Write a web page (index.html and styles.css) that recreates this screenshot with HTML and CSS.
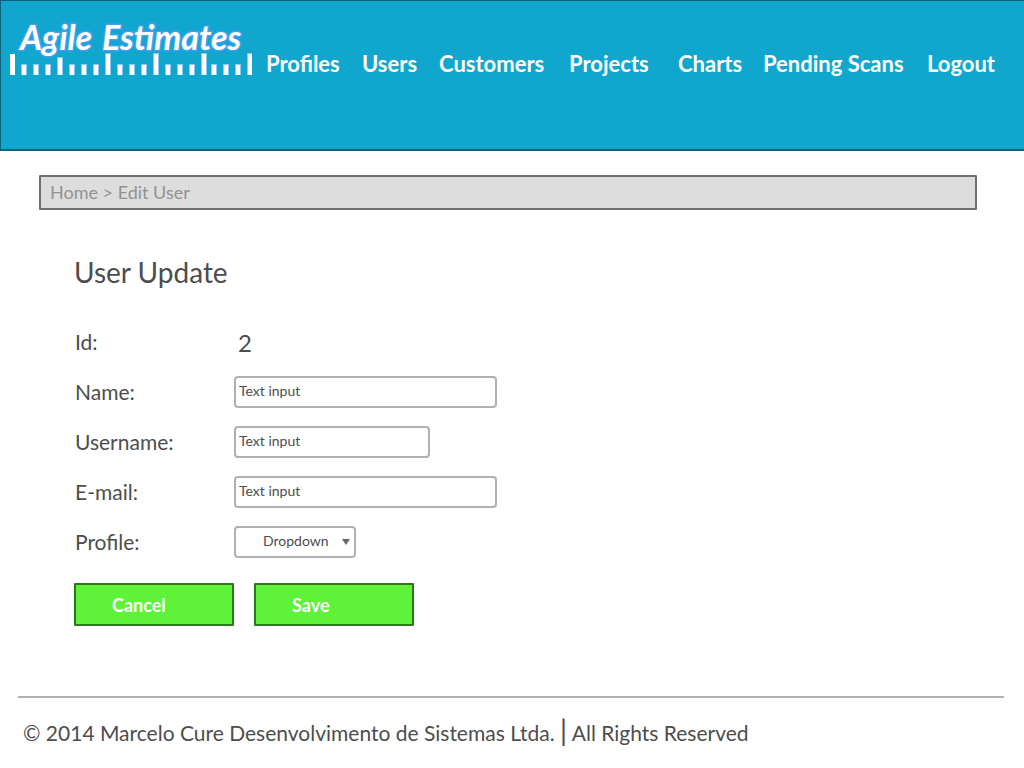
FILE: index.html
```html
<!DOCTYPE html>
<html lang="en">
<head>
  <meta charset="utf-8">
  <title>Agile Estimates - Edit User</title>
  <link rel="stylesheet" href="styles.css">
</head>
<body>
  <header class="site-header">
    <a class="logo" href="#" aria-label="Agile Estimates">
      <svg class="logo-art" viewBox="0 0 242 54" width="242" height="54">
        <g class="logo-text">
          <text x="10" y="29">Agile</text>
          <text x="92" y="29">Estimates</text>
        </g>
        <path class="ruler-edge" d="M11 43h6v11h-6zM23 43h6v11h-6zM35 43h6v11h-6zM47 36h6v18h-6zM59 43h6v11h-6zM71 43h6v11h-6zM83 43h6v11h-6zM95 32h6v22h-6zM107 43h6v11h-6zM119 43h6v11h-6zM131 43h6v11h-6zM143 32h6v22h-6zM155 43h6v11h-6zM167 43h6v11h-6zM179 43h6v11h-6zM191 32h6v22h-6zM201 43h6v11h-6zM213 43h6v11h-6zM225 43h6v11h-6zM237 32h5v22h-5z"/>
        <path class="ruler-bar" d="M0 33h5v21h-5zM12 44h4v10h-4zM24 44h4v10h-4zM36 44h4v10h-4zM48 37h4v17h-4zM60 44h4v10h-4zM72 44h4v10h-4zM84 44h4v10h-4zM96 33h4v21h-4zM108 44h4v10h-4zM120 44h4v10h-4zM132 44h4v10h-4zM144 33h4v21h-4zM156 44h4v10h-4zM168 44h4v10h-4zM180 44h4v10h-4zM192 33h4v21h-4zM202 44h4v10h-4zM214 44h4v10h-4zM226 44h4v10h-4zM238 33h4v21h-4z"/>
      </svg>
    </a>
    <nav class="main-nav">
      <a href="#">Profiles</a>
      <a href="#">Users</a>
      <a href="#">Customers</a>
      <a href="#">Projects</a>
      <a href="#">Charts</a>
      <a href="#">Pending Scans</a>
      <a href="#">Logout</a>
    </nav>
  </header>

  <nav class="breadcrumb" aria-label="Breadcrumb">
    <a href="#">Home</a> &gt; <span>Edit User</span>
  </nav>

  <main class="content">
    <h1>User Update</h1>
    <form class="user-form">
      <div class="row"><span class="label">Id:</span><output class="user-id">2</output></div>
      <div class="row"><label class="label" for="name">Name:</label><input class="field" id="name" type="text" value="Text input"></div>
      <div class="row"><label class="label" for="username">Username:</label><input class="field field-short" id="username" type="text" value="Text input"></div>
      <div class="row"><label class="label" for="email">E-mail:</label><input class="field" id="email" type="text" value="Text input"></div>
      <div class="row">
        <label class="label" for="profile">Profile:</label>
        <span class="select-wrap">
          <select class="field profile" id="profile"><option>Dropdown</option></select>
          <svg class="arrow" viewBox="0 0 8 6" width="8" height="6"><path d="M0 0h8L4 6z"/></svg>
        </span>
      </div>
      <div class="actions">
        <button type="button">Cancel</button>
        <button type="submit">Save</button>
      </div>
    </form>
  </main>

  <footer class="site-footer">© 2014 Marcelo Cure Desenvolvimento de Sistemas Ltda. <span class="divider">|</span> All Rights Reserved</footer>
</body>
</html>
```
FILE: styles.css
```css
* { box-sizing: border-box; }

body {
  margin: 0;
  background: #fff;
  color: #4d4d4d;
  font-family: Lato, "Open Sans", sans-serif;
  font-size: 21px;
}

a { color: inherit; text-decoration: none; }

.site-header {
  display: flex;
  align-items: flex-start;
  min-height: 151px;
  padding: 20px 0 0 9px;
  background: #11a6cd;
  border: 1px solid #0b6279;
  border-right: 0;
  border-bottom-width: 2px;
}

.logo { flex: none; width: 256px; }
.logo-art { display: block; overflow: visible; }
.logo-text {
  fill: #fff;
  stroke: #3fa0f0;
  stroke-width: 3px;
  paint-order: stroke;
  font-size: 34px;
  font-weight: 700;
  font-style: italic;
}
.ruler-edge { fill: #8cc8f5; }
.ruler-bar { fill: #fff; }

.main-nav {
  flex: 1;
  display: grid;
  grid-template-columns: 96fr 77fr 130fr 109fr 85fr 164fr 97fr;
  padding-top: 29px;
  color: #fff;
  font-size: 22px;
  font-weight: 700;
  line-height: 28px;
  white-space: nowrap;
}

.breadcrumb {
  margin: 24px 47px 0 39px;
  padding: 0 9px;
  border: 2px solid #6f6f6f;
  border-radius: 1px;
  background: #ddd;
  color: #929292;
  font-size: 18px;
  line-height: 31px;
}

.content { padding: 44px 40px 0 74px; }

h1 {
  margin: 0;
  font-size: 28px;
  font-weight: 400;
  line-height: 36px;
}

.user-form { padding-top: 27px; }

.row {
  display: grid;
  grid-template-columns: 160px 1fr;
  align-items: center;
  min-height: 50px;
}

.label { padding-left: 1px; font-size: 21px; line-height: 28px; }
.user-id { padding-left: 4px; font-size: 24px; }

.field {
  width: 263px;
  height: 32px;
  padding: 0 3px 3px;
  border: 2px solid #b0b0b0;
  border-radius: 4px;
  background: #fff;
  color: #4d4d4d;
  font: 14px Lato, "Open Sans", sans-serif;
}
.field-short { width: 196px; }

.select-wrap { position: relative; display: flex; width: 122px; }
.profile { width: 100%; padding-left: 27px; appearance: none; }
.arrow {
  position: absolute;
  right: 6px;
  top: 13px;
  fill: #666;
  pointer-events: none;
}

.actions { display: flex; gap: 20px; padding-top: 16px; }
.actions button {
  width: 160px;
  height: 43px;
  padding: 0 36px;
  border: 2px solid #2f771c;
  border-radius: 1px;
  background: #5ef239;
  color: #fff;
  font: 700 18px Lato, "Open Sans", sans-serif;
  text-align: left;
}

.site-footer {
  margin: 70px 20px 0 18px;
  padding: 18px 5px;
  border-top: 2px solid #b0b0b0;
  font-size: 21px;
  line-height: 34px;
}
.divider {
  font-size: 28px;
  line-height: 28px;
}
```
